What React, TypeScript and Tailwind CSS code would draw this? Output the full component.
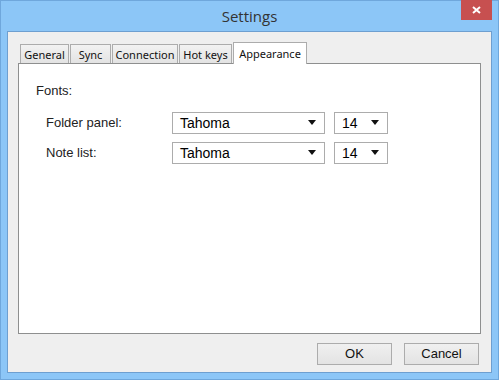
const tabs = [
  { name: "General", w: "w-[49px]" },
  { name: "Sync", w: "w-[41px]" },
  { name: "Connection", w: "w-[66px]" },
  { name: "Hot keys", w: "w-[53px]" },
];

function Select({ value, width }: { value: string; width: string }) {
  return (
    <div
      className={`flex h-[22px] ${width} items-center justify-between border border-[#acacac] bg-white pl-[7px] pr-[8px] text-[14px] text-black`}
    >
      <span className="leading-none">{value}</span>
      <svg width="8" height="5" viewBox="0 0 8 5">
        <path d="M0 0h8L4 5z" fill="#111" />
      </svg>
    </div>
  );
}

function Row({ label, size }: { label: string; size: string }) {
  return (
    <div className="flex items-center">
      <span className="w-[126px] text-[13px] text-[#222]">{label}</span>
      <Select value="Tahoma" width="w-[153px]" />
      <div className="w-[9px]" />
      <Select value={size} width="w-[54px]" />
    </div>
  );
}

export default function App() {
  return (
    <div
      className="flex h-[380px] w-[499px] flex-col border border-[#6fa7dc] bg-[#8cc6f7]"
      style={{ fontFamily: '"Liberation Sans", Arial, sans-serif' }}
    >
      <div className="relative flex h-[30px] shrink-0 items-center justify-center">
        <span
          className="pt-[1px] text-[15px] text-[#333]"
          style={{ fontFamily: '"Open Sans", "Noto Sans", sans-serif' }}
        >
          Settings
        </span>
        <div className="absolute top-[-1px] right-[6px] flex h-[20px] w-[31px] items-center justify-center bg-[#c75050]">
          <svg width="9" height="8" viewBox="0 0 9 8">
            <path d="M1 1l7 6M8 1L1 7" stroke="#fff" strokeWidth="2" />
          </svg>
        </div>
      </div>

      <div className="mx-[6px] mb-[6px] flex flex-1 flex-col border border-[#6e9fd0] bg-[#efefef] px-[10px] pt-[10px]">
        <div
          className="flex items-end gap-px pl-[2px] text-[11px] text-[#111]"
          style={{ fontFamily: '"Noto Sans", "Open Sans", sans-serif' }}
        >
          {tabs.map((t) => (
            <div
              key={t.name}
              className={`flex h-[19px] ${t.w} items-center justify-center border border-b-0 border-[#acacac] bg-linear-to-b from-[#f2f2f2] to-[#e3e3e3] leading-none`}
            >
              {t.name}
            </div>
          ))}
          <div className="relative z-10 -mb-px flex h-[22px] w-[74px] items-center justify-center border border-b-0 border-[#acacac] bg-white leading-none">
            Appearance
          </div>
        </div>

        <div className="flex h-[271px] flex-col border border-[#8e8f8f] bg-white pt-[17px] pl-[17px]">
          <span className="text-[13px] text-[#222]">Fonts:</span>
          <div className="mt-[11px] flex flex-col gap-[8px] pl-[10px]">
            <Row label="Folder panel:" size="14" />
            <Row label="Note list:" size="14" />
          </div>
        </div>

        <div className="flex justify-end gap-[12px] pt-[9px] pr-[2px]">
          {["OK", "Cancel"].map((b) => (
            <div
              key={b}
              className="flex h-[22px] w-[75px] items-center justify-center border border-[#acacac] bg-linear-to-b from-[#f0f0f0] to-[#e3e3e3] text-[13px] text-[#111]"
            >
              {b}
            </div>
          ))}
        </div>
      </div>
    </div>
  );
}
